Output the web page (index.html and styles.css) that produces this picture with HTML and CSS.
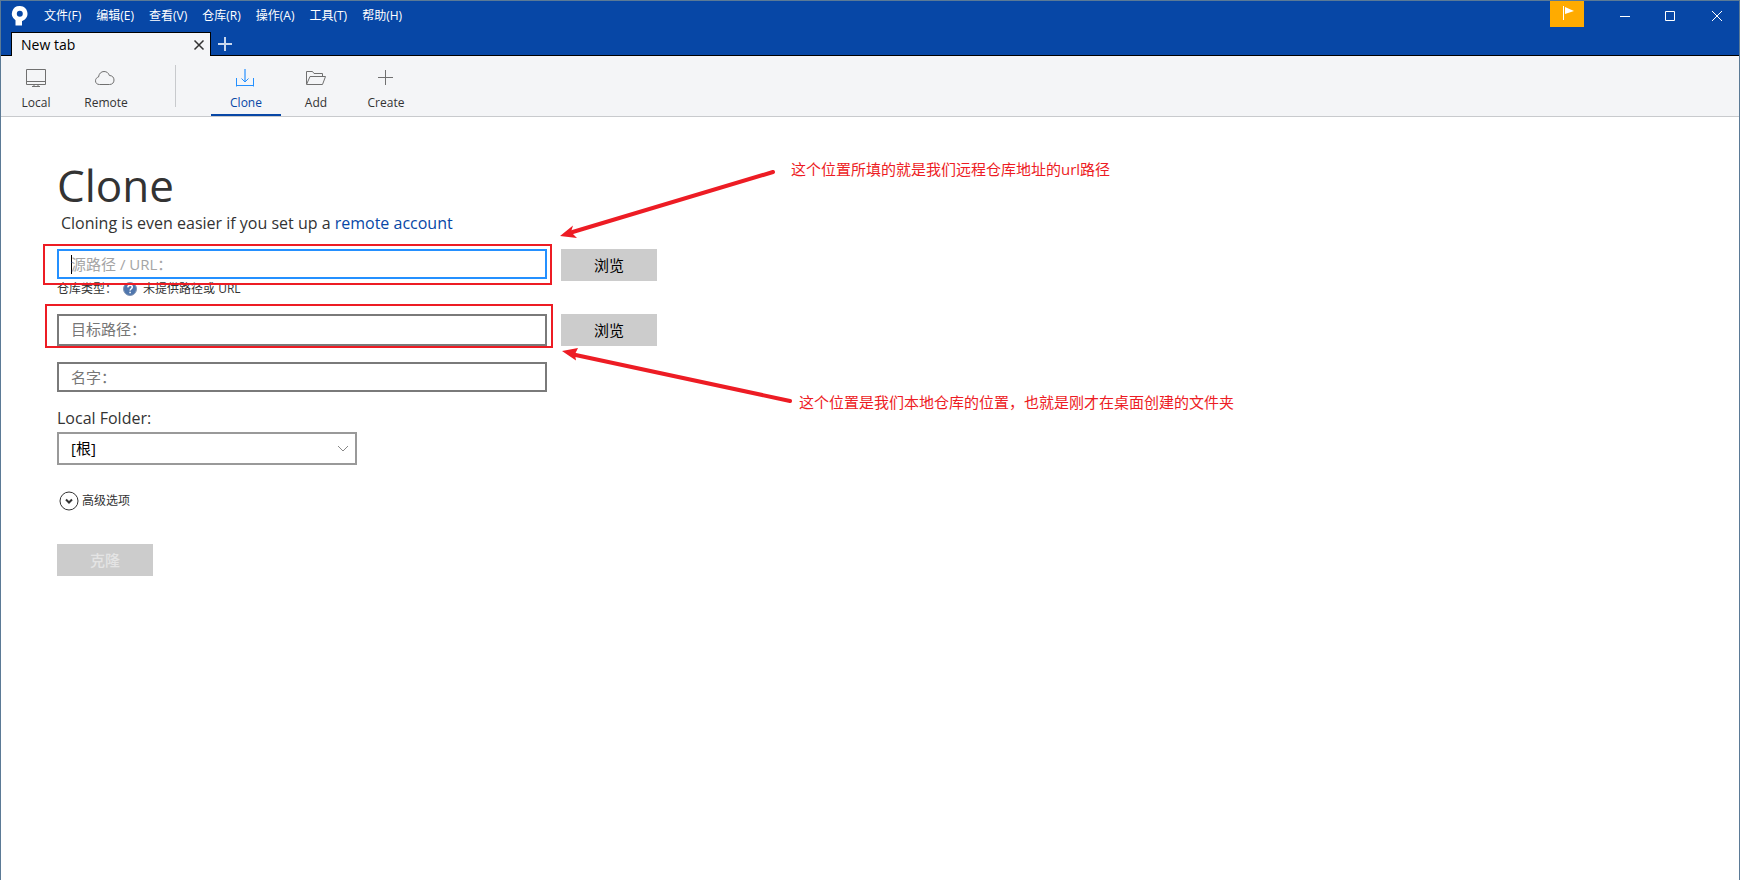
FILE: index.html
```html
<!DOCTYPE html>
<html lang="zh-CN">
<head>
<meta charset="utf-8">
<title>Clone</title>
<link rel="stylesheet" href="styles.css">
</head>
<body>
<div class="window">
  <header class="titlebar">
    <div class="titlebar-row">
      <svg class="logo" viewBox="0 0 18 22" width="18" height="22" aria-hidden="true">
        <path fill="#fff" fill-rule="evenodd" d="M10 1a7.700 7.700 0 0 0-4.500 14.200V20.500H12V16c2.500-.9 5.500-3.200 5.500-7.300C17.500 4.300 14.200 1 10 1zM9.800 5.700a3 3 0 1 1 0 6 3 3 0 0 1 0-6z"/>
      </svg>
      <nav class="menu">
        <button type="button">文件(F)</button>
        <button type="button">编辑(E)</button>
        <button type="button">查看(V)</button>
        <button type="button">仓库(R)</button>
        <button type="button">操作(A)</button>
        <button type="button">工具(T)</button>
        <button type="button">帮助(H)</button>
      </nav>
      <div class="window-controls">
        <button type="button" class="flag" aria-label="Notifications">
          <svg viewBox="0 0 14 16" width="14" height="16"><path d="M3.500 1v14" stroke="#fff"/><path d="M5 2l9 4-9 3z" fill="#fff"/></svg>
        </button>
        <button type="button" class="control" aria-label="Minimize">
          <svg viewBox="-1 0 12 12" width="12" height="12"><path d="M1 6.500h10"/></svg>
        </button>
        <button type="button" class="control" aria-label="Maximize">
          <svg viewBox="-1 0 12 12" width="12" height="12"><path d="M.5 1.500h9v9h-9z"/></svg>
        </button>
        <button type="button" class="control" aria-label="Close">
          <svg viewBox="-1 0 12 12" width="12" height="12"><path d="M1 1l10 10M11 1L1 11"/></svg>
        </button>
      </div>
    </div>
    <div class="tabs">
      <div class="tab">
        <span>New tab</span>
        <button type="button" class="tab-close" aria-label="Close tab">
          <svg viewBox="0 0 12 12" width="12" height="12"><path d="M1.500 1.500l9 9M10.500 1.500l-9 9" stroke="#333" stroke-width="1.500"/></svg>
        </button>
      </div>
      <button type="button" class="tab-add" aria-label="New tab">
        <svg viewBox="0 0 14 14" width="14" height="14"><path d="M7 0v14M0 7h14" stroke="#c9d8ee" stroke-width="2"/></svg>
      </button>
    </div>
  </header>

  <nav class="toolbar">
    <button type="button" class="tool">
      <svg viewBox="0 0 22 20" width="22" height="20"><path d="M1.500 1.500h19v15h-19zM1.500 13.500h19M9 17v1.500M13 17v1.500M7 18.500h8"/></svg>
      <span>Local</span>
    </button>
    <button type="button" class="tool">
      <svg viewBox="1 0 22 20" width="22" height="20"><path d="M5.500 16.500C3 16.500 1.500 15 1.500 12.800c0-2 1.300-3.400 3-3.800C5 5.500 7.200 3.500 10 3.500c2.700 0 4.600 1.500 5.400 4 2.800 0 4.600 1.900 4.600 4.500 0 2.700-1.700 4.500-4.500 4.500z"/></svg>
      <span>Remote</span>
    </button>
    <span class="divider"></span>
    <button type="button" class="tool active">
      <svg viewBox="1 0 22 20" width="22" height="20"><path d="M2.500 10v8.500M19.500 10v8.500M2 17.500h18M7.500 10.500L11 14l3.500-3.500"/><path d="M11 1v12" stroke-width="2" opacity=".6"/></svg>
      <span>Clone</span>
    </button>
    <button type="button" class="tool">
      <svg viewBox="0 0 22 20" width="22" height="20"><path d="M1.500 16V3.500h6l1.500 2h8.500V8M1.500 16.500L5 8.500h15.500l-3 8z"/></svg>
      <span>Add</span>
    </button>
    <button type="button" class="tool">
      <svg viewBox="1 0 22 20" width="22" height="20"><path d="M11.500 2v15M4 9.500h15"/></svg>
      <span>Create</span>
    </button>
  </nav>

  <main class="content">
    <h1>Clone</h1>
    <p class="hint">Cloning is even easier if you set up a <a href="#">remote account</a></p>
    <form class="form">
      <div class="row">
        <div class="field focused"><span class="caret"></span><input type="text" placeholder="源路径 / URL：" aria-label="源路径 / URL"></div>
        <button type="button" class="button">浏览</button>
      </div>
      <div class="repo-type">
        <span>仓库类型：</span>
        <svg viewBox="0 0 14 14" width="14" height="14" aria-hidden="true">
          <circle cx="7" cy="7" r="6.500" fill="#4f76ad" stroke="#8296b4"/>
          <path d="M4.800 5.400C4.900 3.900 5.800 3.200 7.100 3.200c1.300 0 2.200.7 2.200 1.900 0 1.600-2.200 1.700-2.200 3.400M7.100 9.700v1.500" fill="none" stroke="#fff" stroke-width="1.500"/>
        </svg>
        <span>未提供路径或 URL</span>
      </div>
      <div class="row">
        <div class="field tall"><input type="text" placeholder="目标路径：" aria-label="目标路径"></div>
        <button type="button" class="button">浏览</button>
      </div>
      <div class="row name-row">
        <div class="field"><input type="text" placeholder="名字：" aria-label="名字"></div>
      </div>
      <label class="label" for="folder">Local Folder:</label>
      <div class="select">
        <select id="folder"><option>[根]</option></select>
        <svg viewBox="0 0 12 8" width="12" height="8" aria-hidden="true"><path d="M1 1l5 5 5-5"/></svg>
      </div>
      <button type="button" class="advanced">
        <svg viewBox="0 0 20 20" width="20" height="20" aria-hidden="true"><circle cx="10" cy="10" r="9"/><path d="M7 8.500l3 3 3-3" stroke-width="2"/></svg>
        <span>高级选项</span>
      </button>
      <button type="submit" class="button submit" disabled>克隆</button>
    </form>

    <svg class="marks" viewBox="0 0 800 300" width="800" height="300" aria-hidden="true">
      <g fill="none" stroke="#ed1c24" stroke-width="2">
        <path d="M43 128h507v39H43zM45 188h506v42H45z"/>
        <path d="M772 55L570 115.500M789 284L570 237" stroke-width="4" stroke-linecap="round"/>
      </g>
      <path fill="#ed1c24" d="M559 119l13-10.500-2 6.500 6 6zM561 234l16-3-3 6 1 6.500z"/>
    </svg>
    <p class="note note-source">这个位置所填的就是我们远程仓库地址的url路径</p>
    <p class="note note-target">这个位置是我们本地仓库的位置，也就是刚才在桌面创建的文件夹</p>
  </main>
</div>
</body>
</html>
```
FILE: styles.css
```css
* {
  box-sizing: border-box;
}

body {
  margin: 0;
  font-family: "Open Sans", "Noto Sans CJK SC", sans-serif;
  font-size: 15px;
  color: #333;
}

button,
input,
select {
  margin: 0;
  padding: 0;
  border: 0;
  border-radius: 0;
  background: none;
  font: inherit;
  color: inherit;
}

svg {
  flex: none;
  fill: none;
}

.window {
  display: flex;
  flex-direction: column;
  min-height: 100vh;
  border: 1px solid #5b7a96;
  border-bottom: 0;
  background: #fff;
}

.titlebar {
  background: #0747a6;
  border-bottom: 1px solid #000;
}

.titlebar-row {
  display: flex;
  align-items: flex-start;
  height: 31px;
}

.logo {
  margin: 4px 16px 0 9px;
}

.menu {
  display: flex;
  gap: 15px;
  padding-top: 5px;
  font-size: 12px;
  line-height: 20px;
  color: #fff;
}

.window-controls {
  display: flex;
  margin-left: auto;
}

.flag {
  width: 34px;
  height: 26px;
  margin-right: 17px;
  padding-bottom: 2px;
  background: #ffab00;
  line-height: 0;
}

.control {
  width: 46px;
  height: 30px;
  line-height: 0;
}

.control path {
  stroke: #fff;
}

.tabs {
  display: flex;
  padding-left: 10px;
}

.tab {
  display: flex;
  align-items: center;
  justify-content: space-between;
  width: 200px;
  height: 24px;
  margin-bottom: -1px;
  padding: 0 4px 0 9px;
  border: 1px solid #000;
  border-bottom: 0;
  background: #f4f5f7;
  font-size: 14px;
  color: #000;
}

.tab-close {
  display: flex;
  padding: 1px;
}

.tab-add {
  display: flex;
  align-items: center;
  padding-left: 7px;
}

.toolbar {
  display: flex;
  height: 61px;
  border-bottom: 1px solid #c8cacd;
  background: #f4f5f7;
}

.tool {
  display: flex;
  flex-direction: column;
  align-items: center;
  gap: 7px;
  width: 70px;
  padding-top: 12px;
  border-bottom: 2px solid transparent;
  font-size: 12px;
  line-height: 16px;
}

.tool path {
  stroke: #707070;
}

.tool.active {
  border-bottom-color: #0747a6;
  color: #0747a6;
}

.tool.active path {
  stroke: #2490ff;
}

.divider {
  width: 1px;
  height: 42px;
  margin: 9px 35px 0 34px;
  background: #c8cacd;
}

.content {
  position: relative;
  flex: 1;
  padding: 40px 56px;
}

h1 {
  margin: 0;
  font-size: 44px;
  line-height: 56px;
  font-weight: 400;
}

.hint {
  margin: 0 0 16px 4px;
  font-size: 16px;
  line-height: 20px;
}

.hint a {
  color: #0747a6;
  text-decoration: none;
}

.form {
  display: flex;
  flex-direction: column;
  align-items: flex-start;
}

.row {
  display: flex;
  align-items: flex-start;
  gap: 14px;
}

.field {
  display: flex;
  align-items: center;
  width: 490px;
  height: 30px;
  padding: 0 12px;
  border: 2px solid #7a7a7a;
}

.field input {
  flex: 1;
  outline: 0;
}

.field input::placeholder {
  color: #767676;
  opacity: 1;
}

.tall {
  height: 32px;
  padding-bottom: 2px;
}

.focused {
  border-color: #2490ff;
}

.focused input::placeholder {
  color: #a5a5a5;
}

.caret {
  width: 1px;
  height: 19px;
  margin-right: -1px;
  background: #000;
}

.button {
  width: 96px;
  height: 32px;
  padding-bottom: 2px;
  background: #ccc;
  color: #000;
}

.repo-type {
  display: flex;
  align-items: center;
  height: 16px;
  margin-bottom: 17px;
  font-size: 12px;
  line-height: 16px;
  gap: 6px;
}

.name-row {
  margin-top: 16px;
}

.label {
  margin-top: 14px;
  padding-bottom: 2px;
  font-size: 16px;
  line-height: 24px;
}

.select {
  position: relative;
  width: 300px;
  height: 33px;
  border: 2px solid #999;
}

.select select {
  width: 100%;
  height: 100%;
  padding: 0 0 2px 12px;
  appearance: none;
  color: #000;
}

.select svg {
  position: absolute;
  top: 11px;
  right: 6px;
  stroke: #888;
  pointer-events: none;
}

.advanced {
  display: flex;
  align-items: center;
  gap: 3px;
  margin: 26px 0 33px 2px;
  font-size: 12px;
  line-height: 20px;
}

.advanced svg {
  stroke: #333;
}

.submit {
  color: #e4e4e4;
  font-weight: 500;
}

.marks {
  position: absolute;
  top: 0;
  left: 0;
  pointer-events: none;
}

.note {
  position: absolute;
  margin: 0;
  line-height: 22px;
  white-space: nowrap;
  color: #ed1c24;
}

.note-source {
  top: 41px;
  left: 790px;
}

.note-target {
  top: 274px;
  left: 798px;
}
```
